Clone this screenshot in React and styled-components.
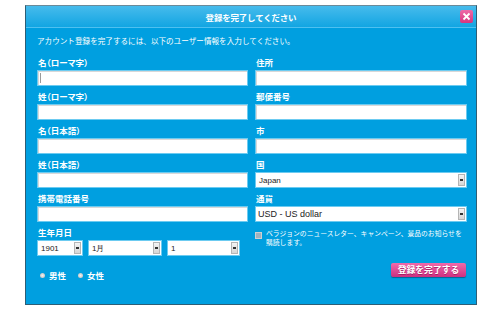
import styled, { createGlobalStyle } from "styled-components";

const GlobalStyle = createGlobalStyle`
  html, body {
    margin: 0;
    padding: 0;
    background: #ffffff;
  }
  body {
    font-family: "Noto Sans CJK JP", "Liberation Sans", sans-serif;
  }
`;

const Dialog = styled.div`
  margin: 5px 0 0 25px;
  width: 452px;
  height: 300px;
  box-sizing: border-box;
  background: #009fe0;
  border: 1px solid #2d5e76;
  border-top-color: #6a8a99;
  display: flex;
  flex-direction: column;
`;

const Header = styled.div`
  height: 21px;
  flex-shrink: 0;
  display: flex;
  align-items: center;
  justify-content: center;
  position: relative;
  background: linear-gradient(#47bbec, #12a5e2);
  border-bottom: 1px solid #4fc0f0;
`;

const Title = styled.div`
  color: #ffffff;
  font-weight: bold;
  font-size: 8.5px;
  letter-spacing: -0.2px;
`;

const Close = styled.div`
  position: absolute;
  right: 3px;
  top: 4px;
  width: 13px;
  height: 13px;
  border-radius: 2px;
  background: linear-gradient(#ee6aa8, #d6367f);
  display: flex;
  align-items: center;
  justify-content: center;
`;

const Body = styled.div`
  padding: 7px 11px 0 11px;
  display: flex;
  flex-direction: column;
`;

const Intro = styled.div`
  color: #ffffff;
  font-size: 7.6px;
  line-height: 12px;
  margin-bottom: 9px;
`;

const Columns = styled.div`
  display: grid;
  grid-template-columns: 211px 212px;
  column-gap: 7px;
`;

const Column = styled.div`
  display: flex;
  flex-direction: column;
  gap: 4px;
`;

const Field = styled.div`
  display: flex;
  flex-direction: column;
  gap: 1px;
`;

const Label = styled.div`
  color: #ffffff;
  font-weight: bold;
  font-size: 8.5px;
  line-height: 13px;
  padding-left: 1px;
  font-feature-settings: "palt";
`;

const Input = styled.div`
  height: 16px;
  box-sizing: border-box;
  background: #ffffff;
  border: 1px solid #6ccbf1;
  box-shadow: inset 1px 1px 0 #d8d8d8;
  position: relative;
`;

const Caret = styled.span`
  position: absolute;
  left: 2px;
  top: 2px;
  width: 1px;
  height: 10px;
  background: #9a9a9a;
`;

const Select = styled.div`
  height: 16px;
  width: ${(p) => p.$w || "auto"};
  box-sizing: border-box;
  background: #ffffff;
  border: 1px solid #6ccbf1;
  display: flex;
  align-items: center;
  justify-content: space-between;
  padding-left: ${(p) => p.$pad || "3px"};
  font-family: "Liberation Sans", Arial, sans-serif;
  font-size: ${(p) => p.$fs || "8px"};
  color: #222222;
`;

const SelectBtn = styled.div`
  width: 7px;
  height: 12px;
  margin-right: 1px;
  box-sizing: border-box;
  border: 1px solid #b5b5b5;
  background: linear-gradient(#f4f4f4, #d6d6d6);
  display: flex;
  align-items: center;
  justify-content: center;
  &::after {
    content: "";
    width: 3px;
    height: 2px;
    background: #333333;
  }
`;

const DateRow = styled.div`
  display: flex;
  gap: 5px;
`;

const Gender = styled.div`
  display: flex;
  align-items: center;
  margin-top: 9px;
  padding-left: 3px;
  gap: 4px;
`;

const Radio = styled.span`
  width: 5px;
  height: 5px;
  border-radius: 50%;
  background: radial-gradient(#f2f2f2, #b8b8b8);
`;

const GenderText = styled.span`
  color: #ffffff;
  font-weight: bold;
  font-size: 8.5px;
  margin-right: 8px;
`;

const Newsletter = styled.div`
  display: flex;
  gap: 4px;
  margin-top: 3px;
`;

const Check = styled.span`
  flex-shrink: 0;
  width: 5px;
  height: 5px;
  margin-top: 3px;
  border: 1px solid #d0d0d0;
  background: #9fb3c0;
`;

const NewsText = styled.div`
  color: #ffffff;
  font-size: 6.8px;
  line-height: 9px;
`;

const SubmitRow = styled.div`
  display: flex;
  justify-content: flex-end;
  margin-top: 12px;
  padding-right: 1px;
`;

const Submit = styled.button`
  all: unset;
  width: 75px;
  height: 14px;
  border-radius: 2px;
  background: linear-gradient(#f06aaa, #cd2f80);
  box-shadow: 0 1px 1px rgba(0, 40, 80, 0.5);
  color: #ffffff;
  font-weight: bold;
  font-size: 8.8px;
  text-align: center;
  line-height: 14px;
  text-shadow: 0 1px 0 rgba(120, 0, 60, 0.5);
`;

const App = () => {
  return (
    <>
      <GlobalStyle />
      <Dialog>
        <Header>
          <Title>登録を完了してください</Title>
          <Close>
            <svg width="9" height="9" viewBox="0 0 9 9">
              <path d="M1.5 1.5 L7.5 7.5 M7.5 1.5 L1.5 7.5" stroke="#ffffff" strokeWidth="1.8" />
            </svg>
          </Close>
        </Header>
        <Body>
          <Intro>アカウント登録を完了するには、以下のユーザー情報を入力してください。</Intro>
          <Columns>
            <Column>
              <Field>
                <Label>名（ローマ字）</Label>
                <Input>
                  <Caret />
                </Input>
              </Field>
              <Field>
                <Label>姓（ローマ字）</Label>
                <Input />
              </Field>
              <Field>
                <Label>名（日本語）</Label>
                <Input />
              </Field>
              <Field>
                <Label>姓（日本語）</Label>
                <Input />
              </Field>
              <Field>
                <Label>携帯電話番号</Label>
                <Input />
              </Field>
              <Field>
                <Label>生年月日</Label>
                <DateRow>
                  <Select $w="46px">
                    1901
                    <SelectBtn />
                  </Select>
                  <Select $w="74px">
                    1月
                    <SelectBtn />
                  </Select>
                  <Select $w="73px">
                    1
                    <SelectBtn />
                  </Select>
                </DateRow>
              </Field>
              <Gender>
                <Radio />
                <GenderText>男性</GenderText>
                <Radio />
                <GenderText>女性</GenderText>
              </Gender>
            </Column>
            <Column>
              <Field>
                <Label>住所</Label>
                <Input />
              </Field>
              <Field>
                <Label>郵便番号</Label>
                <Input />
              </Field>
              <Field>
                <Label>市</Label>
                <Input />
              </Field>
              <Field>
                <Label>国</Label>
                <Select>
                  Japan
                  <SelectBtn />
                </Select>
              </Field>
              <Field>
                <Label>通貨</Label>
                <Select $fs="9px" $pad="2px">
                  USD - US dollar
                  <SelectBtn />
                </Select>
              </Field>
              <Newsletter>
                <Check />
                <NewsText>
                  ベラジョンのニュースレター、キャンペーン、景品のお知らせを
                  <br />
                  購読します。
                </NewsText>
              </Newsletter>
              <SubmitRow>
                <Submit>登録を完了する</Submit>
              </SubmitRow>
            </Column>
          </Columns>
        </Body>
      </Dialog>
    </>
  );
};

export default App;
